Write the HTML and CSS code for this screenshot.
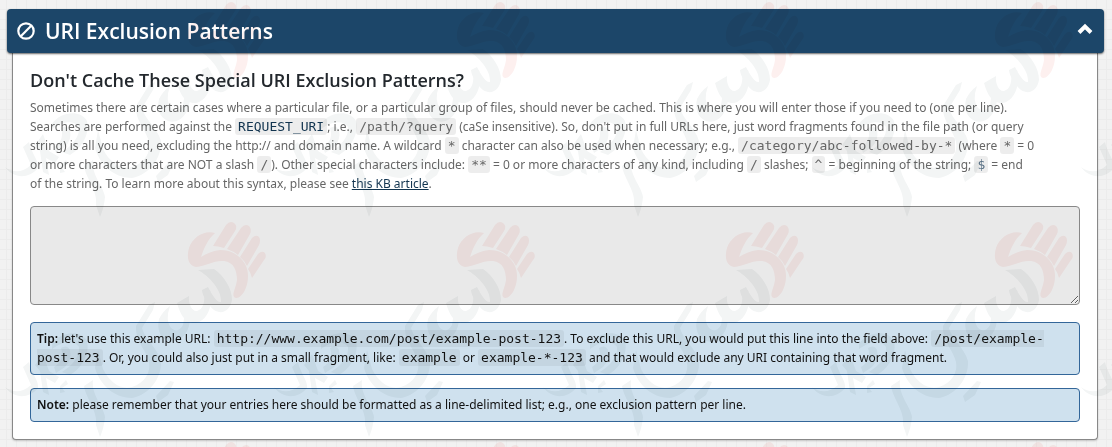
FILE: index.html
```html
<!DOCTYPE html>
<html lang="en">
<head>
    <meta charset="UTF-8">
    <meta name="viewport" content="width=device-width, initial-scale=1.0">
    <title>URI Exclusion Patterns</title>
    <link rel="stylesheet" href="styles.css">
</head>
<body>

    <button type="button" class="panel-heading" aria-expanded="true" aria-controls="panelBody">
        <svg class="icon-ban" viewBox="0 0 18 18" aria-hidden="true">
            <circle cx="9" cy="9" r="7.7"/>
            <path d="M3.8 14.2L14.2 3.8"/>
        </svg>
        <span class="panel-title">URI Exclusion Patterns</span>
        <svg class="icon-chevron" viewBox="0 0 16 12" aria-hidden="true">
            <path d="M2 9.5L8 3.5L14 9.5"/>
        </svg>
    </button>

    <div class="panel-body" id="panelBody">
        <h3><label for="patterns">Don't Cache These Special URI Exclusion Patterns?</label></h3>
        <p class="description">Sometimes there are certain cases where a particular file, or a particular group of files, should never be cached. This is where you will enter those if you need to (one per line).<br>
            Searches are performed against the <a class="code-link" href="#"><code>REQUEST_URI</code></a>; i.e., <code>/path/?query</code> (caSe insensitive). So, don't put in full URLs here, just word fragments found in the file path (or query<br>
            string) is all you need, excluding the http:// and domain name. A wildcard <code>*</code> character can also be used when necessary; e.g., <code>/category/abc-followed-by-*</code> (where <code>*</code> = 0<br>
            or more characters that are NOT a slash <code>/</code>). Other special characters include: <code>**</code> = 0 or more characters of any kind, including <code>/</code> slashes; <code>^</code> = beginning of the string; <code class="dollar">$</code> = end<br>
            of the string. To learn more about this syntax, please see <a href="#">this KB article</a>.</p>

        <textarea id="patterns" rows="5" spellcheck="false"></textarea>

        <p class="info"><strong>Tip:</strong> let's use this example URL: <code>http://www.example.com/post/example-post-123</code>. To exclude this URL, you would put this line into the field above: <code>/post/example-<br>post-123</code>. Or, you could also just put in a small fragment, like: <code>example</code> or <code>example-*-123</code> and that would exclude any URI containing that word fragment.</p>
        <p class="info"><strong>Note:</strong> please remember that your entries here should be formatted as a line-delimited list; e.g., one exclusion pattern per line.</p>
    </div>

    <!-- watermark over the whole page -->
    <svg class="watermark" aria-hidden="true">
        <defs>
            <pattern id="mark" width="269" height="220" patternUnits="userSpaceOnUse">
                <g class="hand">
                    <path d="M215 13C204 10 193 17 189 28C186 38 189 46 196 47C206 46 214 40 224 41C234 42 237 51 237 60C236 68 232 73 234 77C237 80 242 76 245 70C249 61 249 51 245 44C239 34 230 30 220 30C212 31 206 34 201 37C204 28 208 19 215 13Z"/>
                    <path d="M213 26L226 5Q230 0 234 3Q238 6 235 11L224 28Q218 26 213 26Z"/>
                    <path d="M227 29L241 8Q245 3 249 6Q252 9 250 14L238 35Q233 31 227 29Z"/>
                    <path d="M240 37L252 18Q256 14 259 17Q261 20 259 25L247 46Q245 41 240 37Z"/>
                    <path d="M248 49L258 34Q262 30 265 33Q267 37 264 40L252 58Q251 53 248 49Z"/>
                </g>
                <g class="brush">
                    <path d="M198 50L214 49C224 56 232 68 232 80C230 91 222 95 214 90C208 85 202 75 202 70L208 67C212 75 217 83 221 82C222 70 209 56 198 50Z"/>
                    <path d="M177 83L189 76C188 86 194 94 199 90C204 88 205 79 204 72L210 70C214 85 207 102 195 103C184 103 180 93 177 83Z"/>
                    <path d="M159 99Q163 91 170 86Q165 100 171 108Q178 114 183 105L185 92L190 98C190 112 180 125 168 121C159 117 157 108 159 99Z"/>
                    <path d="M136 106L149 85L155 82L153 90L142 108C145 120 157 127 161 141C162 158 149 175 132 178C113 178 99 163 95 148L98 130L103 149C110 163 121 170 132 167C145 163 151 152 149 142C147 131 135 121 136 106Z"/>
                    <path d="M170 161L174 162L168 175L158 182L156 176Z"/>
                    <path d="M84 166L93 160C91 175 104 187 105 197Q104 208 100 217L96 205C98 191 86 179 84 166Z"/>
                    <path d="M5 167C14 174 23 172 31 165L23 147L29 142C31 153 39 160 38 168C28 180 13 178 5 167Z"/>
                    <path d="M35 145L43 134L49 151L59 157L55 163L46 158L49 175L43 172L40 151Z"/>
                    <path d="M52 124C60 112 80 109 87 121C90 134 82 148 70 155L62 152C73 145 80 136 79 127C73 119 62 122 52 129Z"/>
                    <path d="M61 128Q67 124 70 130Q72 140 65 147L56 153L54 147Q65 140 61 128Z"/>
                    <path d="M60 166L66 160L68 164L62 168L65 172L60 173Z"/>
                </g>
            </pattern>
        </defs>
        <rect width="100%" height="100%" fill="url(#mark)"/>
    </svg>

</body>
</html>
```
FILE: styles.css
```css
* {
    box-sizing: border-box;
}

body {
    margin: 0;
    padding: 9px 8px 8px 7px;
    font-family: "Noto Sans", "Open Sans", sans-serif;
    font-size: 12px;
    line-height: 19px;
    color: #666;
    background-color: #f2f2f2;
    background-image:
        repeating-linear-gradient(90deg, transparent 0 6px, #ececec 6px 7px, transparent 7px 10px),
        repeating-linear-gradient(transparent 0 9px, #ececec 9px 10px);
}

.panel-heading {
    display: flex;
    align-items: center;
    gap: 10px;
    width: 100%;
    height: 44px;
    padding: 0 11px 0 10px;
    border: 0;
    border-radius: 4px;
    background-color: #1c4669;
    color: white;
    font-family: "Open Sans", sans-serif;
    font-size: 21px;
    font-weight: 600;
    text-align: left;
    cursor: pointer;
    box-shadow: 0 1px 2px rgba(0, 0, 0, 0.6);
    position: relative;
}

.panel-title {
    flex: 1;
}

.icon-ban {
    width: 18px;
    height: 18px;
    fill: none;
    stroke: white;
    stroke-width: 2.2;
}

.icon-chevron {
    width: 16px;
    height: 12px;
    margin-bottom: 5px;
    fill: none;
    stroke: white;
    stroke-width: 4;
}

.panel-body {
    margin: 0 6px 0 5px;
    padding: 16px 17px 17px;
    border: 1px solid #888;
    border-top: 0;
    border-radius: 0 0 4px 4px;
    background-color: white;
    box-shadow: 0 1px 2px rgba(0, 0, 0, 0.2);
}

h3 {
    margin: 0 0 7px;
    font-family: "Open Sans", sans-serif;
    font-size: 18px;
    font-weight: 600;
    line-height: 22px;
    color: #23282d;
}

p {
    margin: 0;
}

a {
    color: #12344f;
}

.code-link {
    text-decoration: none;
}

code {
    padding: 1px 3px;
    border-radius: 3px;
    background-color: rgba(0, 0, 0, 0.07);
    font-family: "DejaVu Sans Mono", monospace;
    font-size: 13px;
}

.info code {
    background-color: rgba(0, 0, 0, 0.05);
}

.dollar {
    color: #5a7286;
}

textarea {
    display: block;
    width: 100%;
    height: 99px;
    margin: 13px 0 17px;
    padding: 6px;
    border: 1px solid #888;
    border-radius: 4px;
    background-color: #e9e9e9;
    font-family: "DejaVu Sans Mono", monospace;
    font-size: 13px;
    resize: vertical;
}

.info {
    padding: 6px 6px 7px;
    border: 1px solid #336699;
    border-radius: 4px;
    background-color: #cfe1ee;
    color: #111;
}

.info + .info {
    margin-top: 13px;
}

.info strong {
    font-weight: 600;
}

.watermark {
    position: absolute;
    top: 0;
    left: 0;
    width: 100%;
    height: 100%;
    pointer-events: none;
    mix-blend-mode: multiply;
}

.hand {
    fill: #fdf0ef;
}

.brush {
    fill: #f3f5f5;
}
```
